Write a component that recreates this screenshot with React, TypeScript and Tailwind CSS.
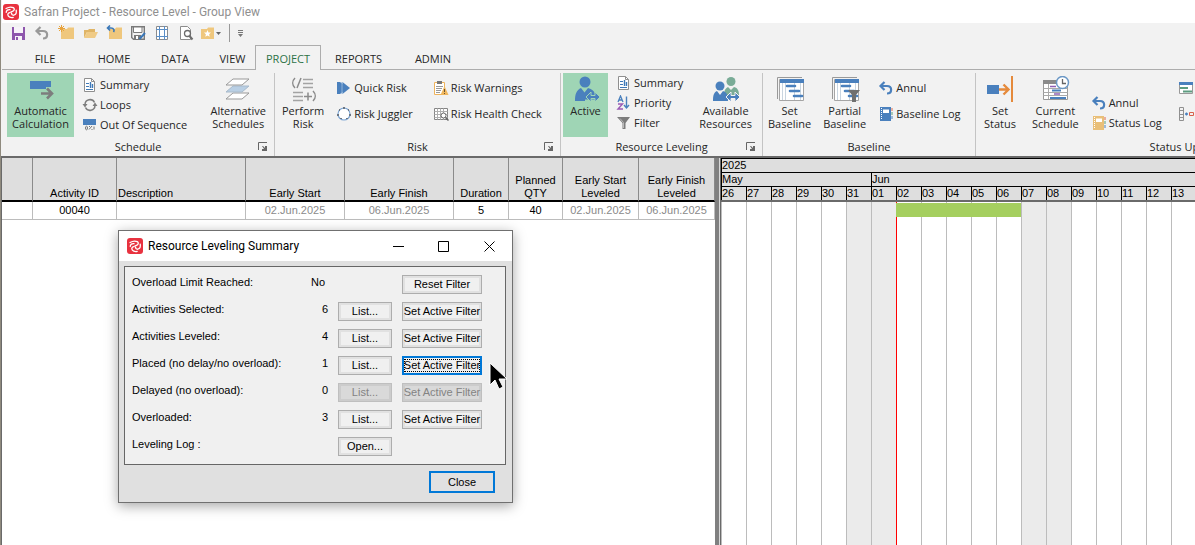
import type { ReactNode } from 'react'

const days = ['26', '27', '28', '29', '30', '31', '01', '02', '03', '04', '05', '06', '07', '08', '09', '10', '11', '12', '13']
const weekend = ['31', '01', '07', '08']

const levelingRows = [
  { label: 'Activities Selected:', count: 6 },
  { label: 'Activities Leveled:', count: 4 },
  { label: 'Placed (no delay/no overload):', count: 1, focused: true },
  { label: 'Delayed (no overload):', count: 0, disabled: true },
  { label: 'Overloaded:', count: 3 },
]

/* ---------- icons ---------- */

function Svg({ w = 16, h = 16, children }: { w?: number; h?: number; children: ReactNode }) {
  return (
    <svg width={w} height={h} viewBox={`0 0 ${w} ${h}`} fill="none" className="shrink-0" aria-hidden="true">
      {children}
    </svg>
  )
}

const LogoIcon = () => (
  <Svg>
    <rect width="16" height="16" rx="3" fill="#e8323f" />
    <g stroke="#fff" strokeWidth="1.3" strokeLinecap="round" strokeLinejoin="round">
      <path d="M3 4.500C5 3.300 8.500 2.800 10.300 3.600c1.500.8 1.200 2.900-.3 3.500L7.800 8" />
      <path d="M13.200 6.200c.4 2.200-.4 4.600-2.400 5-1.500.2-2.300-.9-2.200-2.200" />
      <path d="M10.200 13.400c-2.200.5-5.200-.3-5.400-2.600-.1-1.400 1-2.200 2.300-2.100" />
      <path d="M7 5.600C4.800 5.300 3.400 6.400 3.200 8.400" />
    </g>
  </Svg>
)

const SaveIcon = () => (
  <Svg>
    <path d="M2 2h13v13H2z" fill="#8e56ad" />
    <path d="M4 2h9v6H4zM5 11h7v4H5z" fill="#f7f3f9" />
    <path d="M6 12h2v3H6z" fill="#8e56ad" />
  </Svg>
)

const UndoIcon = ({ color = '#4a80bd' }: { color?: string }) => (
  <Svg>
    <path d="M6.500 2 2.500 6l4 4M3 6h6c5.500 0 5.500 7.500 0 7.500" stroke={color} strokeWidth="2.200" />
  </Svg>
)

const FolderIcon = ({ kind }: { kind: 'new' | 'open' | 'undo' | 'star' }) => (
  <Svg>
    {kind === 'open' ? (
      <>
        <path d="M2 13V5h4l1-1h6v3H5z" fill="#e0b566" />
        <path d="M5 7h11l-3 6H2z" fill="#f0cb86" />
      </>
    ) : (
      <path d="M3 4h6l1-1.500h6V14H3z" fill="#efc77d" />
    )}
    {kind === 'new' && <path d="M3.500 0v7M0 3.500h7M1 1l5 5M6 1 1 6" stroke="#e8a33d" />}
    {kind === 'undo' && <path d="M4 .500 1.500 3 4 5.500M2 3h3c3 0 3.500 2.500 2.500 4" stroke="#3b78b8" strokeWidth="1.600" />}
    {kind === 'star' && <path d="m9.500 5 1 2.400 2.500.2-1.900 1.600.6 2.500-2.200-1.300-2.200 1.300.6-2.500L6 7.600l2.500-.2z" fill="#fff" />}
  </Svg>
)

const SaveAsIcon = () => (
  <Svg>
    <path d="M1.700 1.700h12.600v12.600H3.500l-1.800-1.800z" stroke="#7a7a7a" strokeWidth="1.400" />
    <path d="M3.500 2h8.500v5.500H3.500z" fill="#fff" stroke="#7a7a7a" />
    <path d="M4 10h7v4H4z" fill="#7a7a7a" />
    <path d="M6 11h2v3H6z" fill="#fff" />
    <path d="m9.500 14 5.500-6" stroke="#3b78b8" strokeWidth="2" />
  </Svg>
)

const GridIcon = () => (
  <Svg>
    <path d="M2.500 1.500h11v13h-11z" fill="#fff" stroke="#8c8c8c" />
    <path d="M5.500 1v14M10.500 1v14M2 4.500h12M2 11.500h12" stroke="#5b8fc7" />
  </Svg>
)

const PreviewIcon = () => (
  <Svg>
    <path d="M2.500 1.500h7l3 3v10h-10z" fill="#fff" stroke="#8c8c8c" />
    <circle cx="9.500" cy="8.500" r="3" fill="#fff" stroke="#6c6c6c" strokeWidth="1.300" />
    <path d="m11.500 11 3 3.500" stroke="#6c6c6c" strokeWidth="2" />
  </Svg>
)

const SummaryIcon = () => (
  <Svg>
    <path d="M2.500 1.500h7l3 3v10h-10z" fill="#fff" stroke="#8f8f8f" />
    <path d="M9.500 1.500v3h3" stroke="#8f8f8f" />
    <path d="M4 6.500h3M4 9.500h3M4 12.500h7" stroke="#3f79b7" />
    <path d="M8.500 5v6M10.500 7v4" stroke="#3f79b7" strokeWidth="1.400" />
  </Svg>
)

const LoopsIcon = () => (
  <Svg>
    <path d="M3 7.500a5 5 0 0 1 9.500-2M13 8.500a5 5 0 0 1-9.500 2" stroke="#7d7d7d" strokeWidth="1.500" />
    <path d="M.500 7h5L3 10.500zM10.500 9h5L13 5.500z" fill="#7d7d7d" />
  </Svg>
)

const SequenceIcon = () => (
  <Svg>
    <path d="M1 2h13v6H1z" fill="#4a80bd" />
    <ellipse cx="4.500" cy="11" rx="1" ry="1.800" stroke="#777" />
    <path d="m7 12.500 3-3.500M7 9.500h1M9.500 12.500h1M12 9.500v3" stroke="#777" />
  </Svg>
)

const PlayIcon = () => (
  <Svg>
    <path d="M1 2h3v12H1zM4 2l4 3v6l-4 3z" fill="#4a80bd" />
    <path d="M6.500 2 14 8l-7.500 6z" fill="#4a80bd" />
    <path d="M6 2v12" stroke="#8fb3da" />
  </Svg>
)

const JugglerIcon = () => (
  <Svg>
    <circle cx="8" cy="8" r="6" fill="#fff" stroke="#7da6d4" strokeWidth="1.200" />
    <path d="M7 1h2v2H7zM1 8h2v2H1zM13 8h2v2h-2zM3 3h1v2H3zM12 3h1v2h-1zM4 12h2v1H4zM10 12h2v1h-2z" fill="#6c7682" />
  </Svg>
)

const WarningIcon = () => (
  <Svg>
    <path d="M1.500 2.500h10v12h-10z" fill="#fff" stroke="#eeb35c" />
    <path d="M4 1h5v3H4z" fill="#777" />
    <path d="M3 6.500h7M3 8.500h6M3 10.500h5M3 12.500h4" stroke="#999" />
    <path d="M11.500 6 15.500 15h-8z" fill="#f0b75e" />
    <path d="M11.500 9v3M11.500 13v1" stroke="#665133" />
  </Svg>
)

const HealthIcon = () => (
  <Svg>
    <path d="M1.500 2.500h13v11h-13z" fill="#fff" stroke="#858585" />
    <path d="M1.500 5.500h13M1.500 8.500h13M1.500 11.500h13M4.500 2.500v11M7.500 2.500v11M10.500 2.500v11" stroke="#b0b0b0" />
    <circle cx="10.500" cy="9.500" r="2.500" fill="#fff" stroke="#666" />
    <path d="m12.500 11.500 3 3" stroke="#666" strokeWidth="1.500" />
  </Svg>
)

const PriorityIcon = () => (
  <Svg>
    <path d="m2 7 2.500-6L7 7M3 5h3" stroke="#4a80bd" strokeWidth="1.300" />
    <path d="M2 9h4.500L2 14h5" stroke="#9a5bb5" strokeWidth="1.400" />
    <path d="M10.500 1.500v11M8 10l2.500 3 2.500-3" stroke="#4a80bd" strokeWidth="1.400" />
  </Svg>
)

const FilterIcon = () => (
  <Svg>
    <path d="M1 2h13L9.500 8v6h-3V8z" fill="#7c7c7c" />
    <path d="m4 3.500 3.500 4V13" stroke="#b9b9b9" />
  </Svg>
)

const BookIcon = ({ color }: { color: string }) => (
  <Svg>
    <path d="M2 1h11v14H2z" fill={color} />
    <path d="M5 3.500h6V7H5z" fill="#fff" />
    <path d="M3.500 2v12" stroke="#fff" strokeDasharray="1 1" />
    <path d="M14 2v3" stroke="#e06a4a" />
    <path d="M14 6v3" stroke="#5f9f78" />
    <path d="M14 10v3" stroke="#4a80bd" />
  </Svg>
)

const AutoCalcIcon = () => (
  <Svg w={30} h={28}>
    <path d="M4 5h21v6h-5v2H4z" fill="#4a80bd" />
    <path d="M15 17.500h11M21 12.500l5 5-5 5" stroke="#7d7d7d" strokeWidth="2.600" />
  </Svg>
)

const LayersIcon = () => (
  <Svg w={30} h={28}>
    <path d="M10 17h16l-7 6H3z" fill="#fff" stroke="#999" />
    <path d="M10 10h16l-7 6H3z" fill="#b9cfe4" stroke="#a8bacb" />
    <path d="M10 3h16l-7 6H3z" fill="#fff" stroke="#999" />
  </Svg>
)

const PerformIcon = () => (
  <Svg w={30} h={28}>
    <path d="M7 2c-3 3-3 7 0 10M13 2 9 12" stroke="#8b8b8b" strokeWidth="1.500" />
    <path d="M15 3.500h10M15 7.500h10M15 11.500h10M5 16.500h10M5 20.500h10M5 24.500h10" stroke="#a3a3a3" strokeWidth="1.500" />
    <path d="M16 20.500h8M20 16.500v8M25 15c3 3 3 7 0 10" stroke="#8b8b8b" strokeWidth="1.500" />
  </Svg>
)

const doubleArrow = 'm15 21 5-5v3.500h4V16l5 5-5 5v-3.500h-4V26z'

const ActiveIcon = () => (
  <Svg w={30} h={28}>
    <circle cx="14" cy="6" r="5.500" fill="#4a80bd" />
    <path d="M4 25c0-7 1.500-11 6-13l3.500 4.500L17 12c4 1 6.500 3 7.500 7V25z" fill="#4a80bd" />
    <path d="M14 23.500h15V26H14z" fill="#9fd5b5" />
    <path d={doubleArrow} fill="#4a80bd" stroke="#9fd5b5" />
  </Svg>
)

const ResourcesIcon = () => (
  <Svg w={30} h={28}>
    <circle cx="20" cy="5.500" r="4.500" fill="#7aac97" />
    <path d="M13 19c0-5 2-7 4-8l3 3 3-3c4 1 5 4 5 8z" fill="#7aac97" />
    <circle cx="9" cy="10" r="4.500" fill="#4a80bd" />
    <path d="M2 25c0-6 1-8.500 4-10l3 4 3-4c3 1 5 3 5 10z" fill="#4a80bd" />
    <path d={doubleArrow} fill="#4a80bd" stroke="#f2f2f2" />
  </Svg>
)

const BaselineIcon = ({ partial }: { partial?: boolean }) => (
  <Svg w={30} h={28}>
    <path d="M2.500 23V1.500H27" stroke="#999" />
    <path d="M4.500 3.500h24v21h-24z" fill="#fff" stroke="#a5a5a5" />
    <path d="M7.500 4v20M10.500 4v20M19.500 4v20M25.500 4v20" stroke="#c9d5e0" />
    <path d="M5 3h24v4H5z" fill="#4a80bd" />
    <path d="M12 10h8M15 15h9M19 20h8" stroke="#4a80bd" strokeWidth="2.600" strokeLinecap="round" />
    {partial && <path d="M18 14h12l-4 5v7h-4v-7z" fill="#707070" />}
  </Svg>
)

const StatusIcon = () => (
  <Svg w={30} h={28}>
    <path d="M2 9h12v9H2z" fill="#4a80bd" />
    <path d="M14 13.500h9M18.500 8.500l5 5-5 5" stroke="#e58a3c" strokeWidth="2.400" />
    <path d="M27 0v26" stroke="#e58a3c" strokeWidth="2" />
  </Svg>
)

const ScheduleIcon = () => (
  <Svg w={30} h={28}>
    <path d="M3.500 4.500h24v19h-24z" fill="#fff" stroke="#999" />
    <path d="M3 4h16v4H3z" fill="#8a8a8a" />
    <path d="M3.500 12.500h24M3.500 16.500h24M3.500 19.500h24M8.500 8v15" stroke="#aaa" />
    <path d="M10 10.500h6M14 18h6" stroke="#9060b5" strokeWidth="1.600" />
    <path d="M12 14.500h9M10 22h16" stroke="#4a80bd" strokeWidth="1.800" />
    <circle cx="22.500" cy="6.500" r="6" fill="#fff" stroke="#6b98c6" strokeWidth="1.500" />
    <path d="M22.500 3v4.500H26" stroke="#666" strokeWidth="1.300" />
  </Svg>
)

const TableIcon = () => (
  <Svg>
    <path d="M1.500 2.500h13v11h-13z" fill="#fff" stroke="#999" />
    <path d="M1 2h14v3H1z" fill="#4a80bd" />
    <path d="M2 8h8M5 11.500h9" stroke="#5d9c80" strokeWidth="2" />
  </Svg>
)

const LinkIcon = () => (
  <Svg>
    <path d="M1.500 1.500h4v13h-4zM1.500 4.500h4M1.500 8.500h4M1.500 11.500h4" stroke="#909090" />
    <path d="M7 8h3M8.500 6.500v3" stroke="#4a80bd" strokeWidth="1.300" />
    <path d="M11.500 6.500h4v3h-4z" stroke="#d9604c" />
  </Svg>
)

/* ---------- ribbon ---------- */

function BigButton({ icon, lines, active, className = '' }: { icon: ReactNode; lines: string[]; active?: boolean; className?: string }) {
  return (
    <button type="button" aria-pressed={active} className={`flex h-16 shrink-0 flex-col items-center pt-[3px] leading-[13px] ${active ? 'bg-[#9fd5b5]' : ''} ${className}`}>
      {icon}
      {lines.map((line) => (
        <span key={line}>{line}</span>
      ))}
    </button>
  )
}

function SmallButton({ icon, label, title }: { icon: ReactNode; label?: string; title?: string }) {
  return (
    <button type="button" aria-label={title} className="flex h-4 items-center gap-[2px] whitespace-nowrap">
      {icon}
      {label}
    </button>
  )
}

function Group({ title, className, launcher, children }: { title: string; className: string; launcher?: boolean; children: ReactNode }) {
  return (
    <section className={`flex shrink-0 flex-col border-r border-[#c4c4c4] ${className}`}>
      <div className="flex h-[66px] items-start pl-[5px]">{children}</div>
      <div className="flex items-center">
        <span className="w-4" />
        <h2 className="flex-1 text-center">{title}</h2>
        <button type="button" aria-label={`${title} options`} className="w-4">
          {launcher && (
            <svg width="10" height="10" viewBox="0 0 10 10" fill="none">
              <path d="M.5 8V.5H9" stroke="#666" />
              <path d="M4 4h1l2 2V4h2v5H4V7h2z" fill="#666" />
            </svg>
          )}
        </button>
      </div>
    </section>
  )
}

function Ribbon() {
  return (
    <div className="flex h-[86px] overflow-hidden pt-[3px]">
      <Group title="Schedule" launcher className="w-[273px]">
        <BigButton active icon={<AutoCalcIcon />} lines={['Automatic', 'Calculation']} className="w-[67px]" />
        <div className="ml-2 flex flex-1 flex-col gap-1 pt-1">
          <SmallButton icon={<SummaryIcon />} label="Summary" />
          <SmallButton icon={<LoopsIcon />} label="Loops" />
          <SmallButton icon={<SequenceIcon />} label="Out Of Sequence" />
        </div>
        <BigButton icon={<LayersIcon />} lines={['Alternative', 'Schedules']} className="pr-2" />
      </Group>
      <Group title="Risk" launcher className="w-[286px]">
        <BigButton icon={<PerformIcon />} lines={['Perform', 'Risk']} className="pl-[2px]" />
        <div className="ml-3 flex flex-col gap-[10px] pt-[7px]">
          <SmallButton icon={<PlayIcon />} label="Quick Risk" />
          <SmallButton icon={<JugglerIcon />} label="Risk Juggler" />
        </div>
        <div className="ml-5 flex flex-col gap-[10px] pt-[7px]">
          <SmallButton icon={<WarningIcon />} label="Risk Warnings" />
          <SmallButton icon={<HealthIcon />} label="Risk Health Check" />
        </div>
      </Group>
      <Group title="Resource Leveling" launcher className="w-[202px] [&>div:first-child]:pl-[2px]">
        <BigButton active icon={<ActiveIcon />} lines={['Active']} className="w-[45px]" />
        <div className="ml-2 flex flex-1 flex-col gap-1 pt-[2px]">
          <SmallButton icon={<SummaryIcon />} label="Summary" />
          <SmallButton icon={<PriorityIcon />} label="Priority" />
          <SmallButton icon={<FilterIcon />} label="Filter" />
        </div>
        <BigButton icon={<ResourcesIcon />} lines={['Available', 'Resources']} className="pr-[10px]" />
      </Group>
      <Group title="Baseline" className="w-[213px]">
        <BigButton icon={<BaselineIcon />} lines={['Set', 'Baseline']} />
        <BigButton icon={<BaselineIcon partial />} lines={['Partial', 'Baseline']} className="ml-3" />
        <div className="ml-3 flex flex-col gap-[10px] pt-[7px]">
          <SmallButton icon={<UndoIcon />} label="Annul" />
          <SmallButton icon={<BookIcon color="#4a80bd" />} label="Baseline Log" />
        </div>
      </Group>
      <Group title="Status Updates" className="w-[426px]">
        <BigButton icon={<StatusIcon />} lines={['Set', 'Status']} className="pl-[3px]" />
        <BigButton icon={<ScheduleIcon />} lines={['Current', 'Schedule']} className="ml-4" />
        <div className="ml-3 flex flex-col gap-1 pt-[22px]">
          <SmallButton icon={<UndoIcon />} label="Annul" />
          <SmallButton icon={<BookIcon color="#e9bf78" />} label="Status Log" />
        </div>
        <div className="ml-4 flex flex-col gap-[10px] pt-[7px]">
          <SmallButton icon={<TableIcon />} title="Update status" />
          <SmallButton icon={<LinkIcon />} title="Split activity" />
        </div>
      </Group>
    </div>
  )
}

function QuickAccess() {
  return (
    <div className="flex h-[22px] items-center gap-2 pb-[2px] pl-2">
      <button type="button" aria-label="Save"><SaveIcon /></button>
      <button type="button" aria-label="Undo"><UndoIcon color="#999" /></button>
      <button type="button" aria-label="New"><FolderIcon kind="new" /></button>
      <button type="button" aria-label="Open"><FolderIcon kind="open" /></button>
      <button type="button" aria-label="Revert"><FolderIcon kind="undo" /></button>
      <button type="button" aria-label="Save as"><SaveAsIcon /></button>
      <button type="button" aria-label="Layout"><GridIcon /></button>
      <button type="button" aria-label="Preview"><PreviewIcon /></button>
      <button type="button" aria-label="Favorites" className="-ml-1 flex items-center gap-[2px]">
        <FolderIcon kind="star" />
        <svg width="5" height="3" viewBox="0 0 5 3"><path d="M0 0h5L2.500 3z" fill="#666" /></svg>
      </button>
      <span className="h-[18px] w-px bg-[#999]" />
      <button type="button" aria-label="Customize">
        <svg width="5" height="7" viewBox="0 0 5 7"><path d="M0 0h5v1H0zM0 2h5v1H0zM0 4h5L2.500 7z" fill="#777" /></svg>
      </button>
    </div>
  )
}

function Tab({ label, className }: { label: string; className: string }) {
  return (
    <button type="button" role="tab" className={`h-[25px] border-b border-[#adadad] pt-1 text-center ${className}`}>
      {label}
    </button>
  )
}

function Tabs() {
  return (
    <div role="tablist" className="flex">
      <Tab label="FILE" className="w-[86px]" />
      <Tab label="HOME" className="w-[52px]" />
      <Tab label="DATA" className="w-[70px]" />
      <Tab label="VIEW" className="w-[45px]" />
      <button type="button" role="tab" aria-selected="true" className="h-[25px] w-[66px] border border-b-0 border-[#adadad] pt-[2px] text-[#2e7347]">
        PROJECT
      </button>
      <Tab label="REPORTS" className="w-[75px]" />
      <Tab label="ADMIN" className="w-[74px]" />
      <div className="flex-1 border-b border-[#adadad]" />
    </div>
  )
}

/* ---------- activity table and gantt ---------- */

function ActivityTable() {
  const th = 'border-r border-[#8a8a8a] p-0 align-bottom font-normal'
  const td = 'border-r border-b border-[#bcbcbc] p-0 align-top'
  return (
    <div className="w-[713px] shrink-0">
      <table className="w-full table-fixed border-separate border-spacing-0 text-center">
        <colgroup>
          <col className="w-[31px]" />
          <col className="w-[84px]" />
          <col className="w-[129px]" />
          <col className="w-[99px]" />
          <col className="w-[109px]" />
          <col className="w-[55px]" />
          <col className="w-[54px]" />
          <col className="w-[76px]" />
          <col className="w-[76px]" />
        </colgroup>
        <thead>
          <tr className="h-11 bg-[#dedede] leading-[13px] [&>th]:border-b-2 [&>th]:border-b-black">
            <th className={th} />
            <th className={th}>Activity ID</th>
            <th className={`${th} pl-px text-left`}>Description</th>
            <th className={th}>Early Start</th>
            <th className={th}>Early Finish</th>
            <th className={th}>Duration</th>
            <th className={th}>Planned<br />QTY</th>
            <th className={th}>Early Start<br />Leveled</th>
            <th className={th}>Early Finish<br />Leveled</th>
          </tr>
        </thead>
        <tbody>
          <tr className="h-[18px] leading-4">
            <td className={td} />
            <td className={td}>00040</td>
            <td className={td} />
            <td className={`${td} text-[#8a8a8a]`}>02.Jun.2025</td>
            <td className={`${td} text-[#8a8a8a]`}>06.Jun.2025</td>
            <td className={td}>5</td>
            <td className={td}>40</td>
            <td className={`${td} text-[#8a8a8a]`}>02.Jun.2025</td>
            <td className={`${td} text-[#8a8a8a]`}>06.Jun.2025</td>
          </tr>
        </tbody>
      </table>
    </div>
  )
}

function Gantt() {
  return (
    <div className="flex min-w-0 flex-1 flex-col overflow-hidden border-l border-[#6a6a6a]">
      <div className="border-y border-t-black border-b-2 border-b-[#6a6a6a] bg-[#dedede] leading-[13px]">
        <div className="h-[14px] border-b border-l border-black">2025</div>
        <div className="flex h-[14px] border-b border-black">
          <div className="w-[150px] border-l border-black">May</div>
          <div className="flex-1 border-l border-black">Jun</div>
        </div>
        <div className="flex h-[13px]">
          {days.map((day) => (
            <div key={day} className="w-[25px] shrink-0 border-l border-black">{day}</div>
          ))}
        </div>
      </div>
      <div className="relative flex flex-1">
        {days.map((day) => (
          <div key={day} className={`w-[25px] shrink-0 border-l ${day === '02' ? 'border-[#ff0000]' : 'border-[#bcbcbc]'} ${weekend.includes(day) ? 'bg-[#ebebeb]' : ''}`} />
        ))}
        <div className="absolute top-px left-[175px] h-[14px] w-[125px] bg-[#a5cf5f]" />
      </div>
    </div>
  )
}

/* ---------- leveling dialog ---------- */

function DialogButton({ children, disabled, focused }: { children: ReactNode; disabled?: boolean; focused?: boolean }) {
  const look = disabled
    ? 'border border-[#bfbfbf] bg-[#d9d9d9] text-[#838383] shadow-[inset_0_0_0_2px_#cccccc]'
    : focused
      ? 'border-2 border-[#0078d7] bg-[#f0f0f0]'
      : 'border border-[#adadad] bg-[#f0f0f0] shadow-[inset_0_0_0_2px_#e1e1e1]'
  return (
    <button type="button" disabled={disabled} className={`flex h-[19px] items-center justify-center whitespace-nowrap ${look}`}>
      {focused ? <span className="outline outline-dotted -outline-offset-1 outline-black leading-[13px]">{children}</span> : children}
    </button>
  )
}

function LevelingRow({ label, count, focused, disabled }: { label: string; count: number; focused?: boolean; disabled?: boolean }) {
  return (
    <>
      <span className="pb-1 whitespace-nowrap">{label}</span>
      <span className="pb-1 text-right">{count}</span>
      <DialogButton disabled={disabled}>List...</DialogButton>
      <DialogButton disabled={disabled} focused={focused}>Set Active Filter</DialogButton>
    </>
  )
}

function LevelingDialog() {
  return (
    <div role="dialog" aria-label="Resource Leveling Summary" className="absolute top-[230px] left-[117px] w-[395px] border border-[#707070] bg-[#e0e0e0] shadow-[0_3px_12px_rgba(0,0,0,0.35)]">
      <div className="flex h-[30px] items-center bg-white pl-2">
        <LogoIcon />
        <h1 className="ml-[5px] flex-1 font-[Roboto,sans-serif] text-xs">Resource Leveling Summary</h1>
        <div className="flex">
          <button type="button" aria-label="Minimize" className="flex w-[45px] justify-center">
            <svg width="11" height="11" viewBox="0 0 11 11"><path d="M0 5.500h11" stroke="#000" /></svg>
          </button>
          <button type="button" aria-label="Maximize" className="flex w-[45px] justify-center">
            <svg width="11" height="11" viewBox="0 0 11 11" fill="none"><path d="M.5.5h10v10H.5z" stroke="#000" /></svg>
          </button>
          <button type="button" aria-label="Close window" className="flex w-[46px] justify-center">
            <svg width="11" height="11" viewBox="0 0 11 11"><path d="m.5.5 10 10M10.500.5l-10 10" stroke="#000" /></svg>
          </button>
        </div>
      </div>
      <div className="mt-[5px] mr-[6px] ml-[5px] border border-[#666] bg-[#f0f0f0] pt-1 pb-1 pl-[7px]">
        <div className="grid auto-rows-[27px] grid-cols-[162px_24px_54px_80px] items-center gap-x-[10px]">
          <span className="pb-1">Overload Limit Reached:</span>
          <span className="pr-[3px] pb-1 text-right">No</span>
          <span />
          <DialogButton>Reset Filter</DialogButton>
          {levelingRows.map((row) => (
            <LevelingRow key={row.label} {...row} />
          ))}
          <span className="pb-1">Leveling Log :</span>
          <span />
          <DialogButton>Open...</DialogButton>
        </div>
      </div>
      <div className="flex justify-end pt-[6px] pr-[17px] pb-[9px]">
        <button type="button" className="h-[22px] w-[66px] border-2 border-[#0078d7] bg-[#e1e1e1]">Close</button>
      </div>
      <svg width="20" height="30" viewBox="0 0 20 30" className="absolute top-[131px] left-[370px]">
        <path d="M1 1v22l5-5 4 9 4-2-4-8h8z" fill="#000" stroke="#fff" />
      </svg>
    </div>
  )
}

export default function App() {
  return (
    <div className="relative flex min-h-screen flex-col overflow-hidden border-l border-[#8f8a7e] bg-white font-['Liberation_Sans',Arial,sans-serif] text-[11px] text-black">
      <header className="bg-[#f2f2f2] pl-px font-['Open_Sans',sans-serif] text-[#262626]">
        <div className="flex h-[23px] items-center gap-[5px] bg-white pl-px">
          <LogoIcon />
          <span className="font-[Roboto,sans-serif] text-xs text-[#8f8f8f]">Safran Project - Resource Level - Group View</span>
        </div>
        <QuickAccess />
        <Tabs />
        <Ribbon />
      </header>
      <main className="flex flex-1 border-t-2 border-l border-[#6a6a6a]">
        <ActivityTable />
        <div className="w-[5px] shrink-0 border-r border-[#d8d8d8] bg-[#808080]" />
        <Gantt />
      </main>
      <LevelingDialog />
    </div>
  )
}
